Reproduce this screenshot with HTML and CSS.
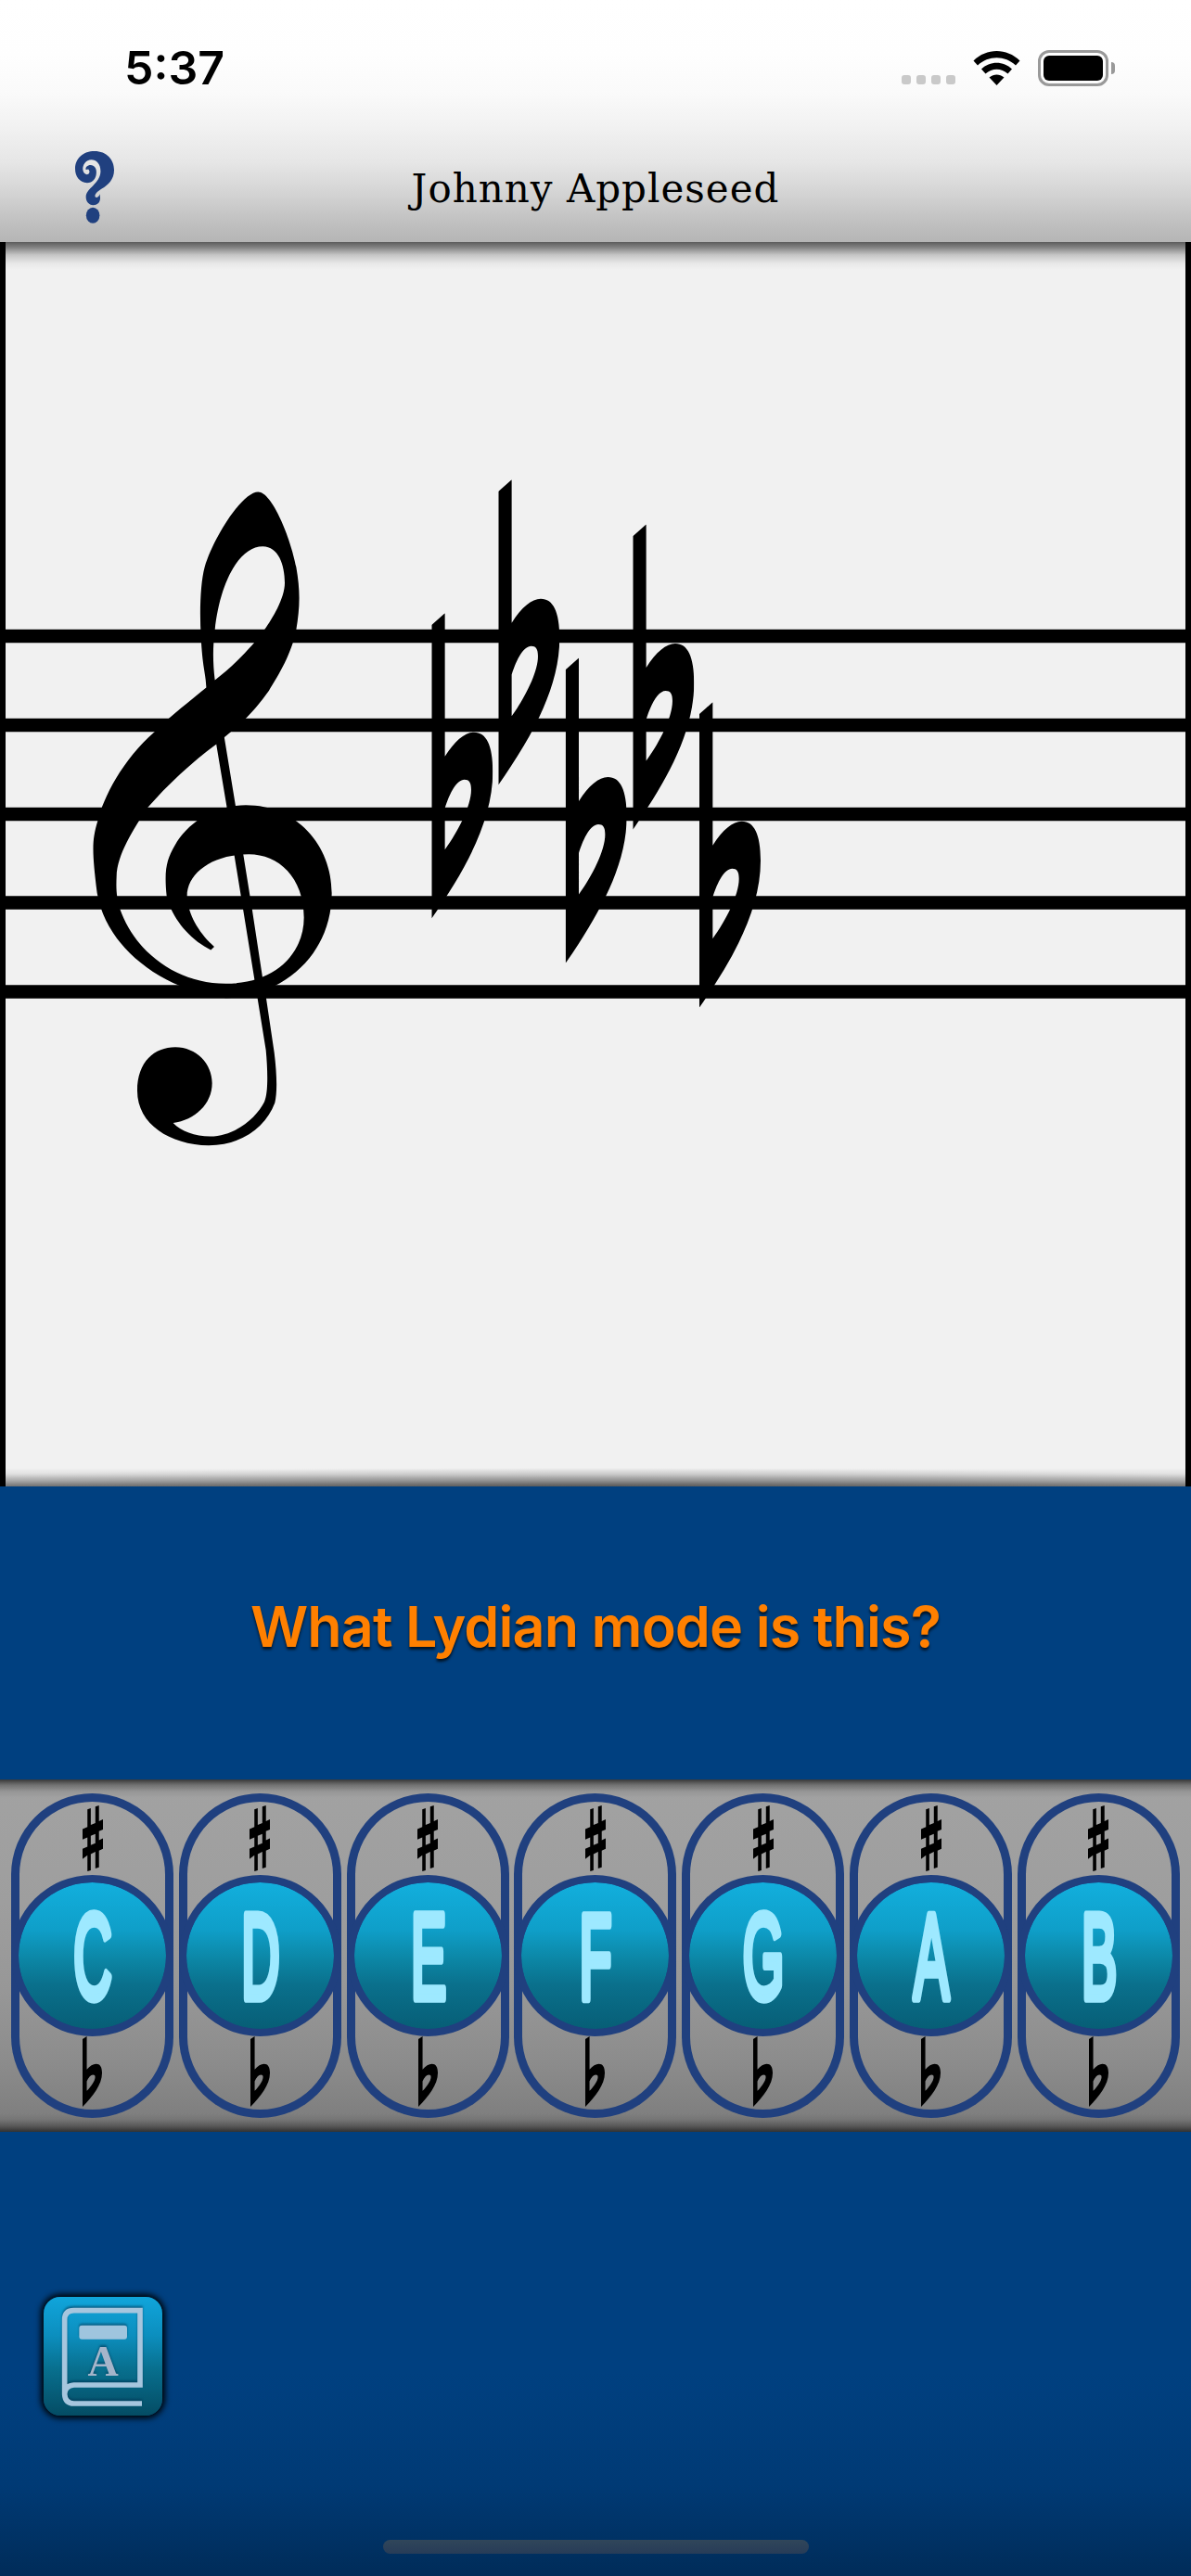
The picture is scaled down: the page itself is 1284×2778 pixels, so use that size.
FILE: index.html
```html
<!DOCTYPE html>
<html lang="en">
<head>
    <meta charset="UTF-8">
    <meta name="viewport" content="width=device-width, initial-scale=1.0">
    <title>Johnny Appleseed</title>
    <link rel="stylesheet" href="styles.css">
</head>
<body>
    <!-- Shared music symbols -->
    <svg class="symbols">
        <symbol id="sharp" viewBox="264 141 67 214" preserveAspectRatio="none">
            <path d="M280 154L291 150V204L306 198V145L318 141V192L331 186V219L318 225V254L331 248V282L318 288V342L306 346V292L291 299V352L280 355V303L264 315V282L280 275V245L264 252V218L280 211ZM291 240V270L306 264V234Z" fill-rule="evenodd"/>
        </symbol>
        <symbol id="flat" viewBox="0 0 198 833" preserveAspectRatio="none">
            <path d="M0 32L43 0V391C75 348 108 325 137 325C177 325 198 360 198 432C198 570 105 705 0 833ZM43 532V645C85 597 128 526 128 482C128 461 121 454 106 454C82 454 59 489 43 532Z" fill-rule="evenodd"/>
        </symbol>
    </svg>

    <header class="header">
        <div class="status-bar">
            <span class="time">5:37</span>
            <div class="status-icons">
                <div class="signal"><i></i><i></i><i></i><i></i></div>
                <svg class="wifi" viewBox="0 0 50 37">
                    <path d="M0 10.5C14-3.500 36-3.500 50 10.500L45.500 15.500C34 4.500 16 4.500 4.500 15.500Z"/>
                    <path d="M8.500 19.500C17.500 10.500 32.500 10.500 41.500 19.500L37 24.500C30 18 20 18 13 24.500Z"/>
                    <path d="M17 28.500C22 24.500 28 24.500 33 28.500L25 37Z"/>
                </svg>
                <div class="battery"><span></span></div>
            </div>
        </div>
        <div class="title-bar">
            <svg class="help" viewBox="199 489 101 233" preserveAspectRatio="none">
                <path d="M230 591C210 590 199 571 199 546C199 511 221 489 249 489C281 489 300 516 300 550C300 580 285 597 268 610C255 620 249 629 251 636C254 641 260 638 263 627L264 640C264 655 256 663 246 663C234 663 227 650 227 637C227 608 264 595 265 554C265 530 254 517 241 517C227 517 218 534 219 549C220 560 226 565 231 564C237 562 238 552 233 547L227 549C225 541 231 534 239 534C249 534 255 545 254 559C253 579 244 591 230 591Z"/>
                <ellipse cx="245" cy="696" rx="17.500" ry="25.500"/>
            </svg>
            <h1>Johnny Appleseed</h1>
        </div>
    </header>

    <main>
        <section class="staff">
            <svg viewBox="0 261 1284 1342">
                <!-- Staff lines -->
                <g class="lines">
                    <path d="M0 686H1284M0 782H1284M0 878H1284M0 973.500H1284M0 1069.500H1284"/>
                </g>
                <!-- Treble clef -->
                <g transform="translate(60 500) scale(.33333 .48469)">
                    <path fill-rule="evenodd" d="M487 496C486 470 474 450 470 385C465 330 468 265 482 230C513 160 605 63 655 63C700 63 760 165 778 230C792 285 790 320 778 370C764 422 720 472 690 505C650 545 600 580 545 609L520 624C440 664 360 716 298 765C250 815 199 870 197 918C195 950 197 965 208 991C255 1085 390 1157 550 1157C710 1157 803 1090 803 1010C803 920 720 869 625 869C505 869 425 912 425 962C428 1008 470 1048 513 1075L502 1082C430 1058 374 1008 359 962C350 902 360 880 385 850C430 795 520 760 615 760C780 760 893 850 893 955C893 1090 740 1185 550 1189C350 1172 165 1080 134 955C118 865 116 840 136 795C155 743 215 660 320 597C365 565 430 530 487 498ZM515 482C508 440 508 410 515 370C530 270 590 184 670 184C720 184 741 225 741 265C741 300 700 345 677 368C640 405 570 453 515 482Z"/>
                    <path d="M519 622L545 607L582 762L607 870L635 990L669 1143L681 1190L707 1310C716 1360 717 1400 709 1422C680 1475 605 1516 495 1517C370 1515 264 1470 264 1395C264 1330 320 1298 387 1298C455 1298 506 1335 506 1378C506 1425 450 1460 380 1467C405 1485 450 1497 500 1497C580 1497 650 1455 675 1420C688 1400 686 1350 680 1305L653 1190L600 965L578 872L553 762Z"/>
                </g>
                <!-- Key signature -->
                <use href="#flat" x="465.300" y="661.300" width="66" height="329.300"/>
                <use href="#flat" x="537.300" y="517.300" width="66" height="329.300"/>
                <use href="#flat" x="609.700" y="709.500" width="66" height="329.300"/>
                <use href="#flat" x="682.300" y="565.500" width="66" height="329.300"/>
                <use href="#flat" x="754" y="757.300" width="66" height="329.300"/>
            </svg>
        </section>

        <section class="question">
            <p>What Lydian mode is this?</p>
        </section>

        <section class="keys">
            <button class="key">
                <svg class="sharp"><use href="#sharp"/></svg>
                <span class="note"><svg viewBox="0 0 157 157"><text>C</text></svg></span>
                <svg class="flat"><use href="#flat"/></svg>
            </button>
            <button class="key">
                <svg class="sharp"><use href="#sharp"/></svg>
                <span class="note"><svg viewBox="0 0 157 157"><text>D</text></svg></span>
                <svg class="flat"><use href="#flat"/></svg>
            </button>
            <button class="key">
                <svg class="sharp"><use href="#sharp"/></svg>
                <span class="note"><svg viewBox="0 0 157 157"><text>E</text></svg></span>
                <svg class="flat"><use href="#flat"/></svg>
            </button>
            <button class="key">
                <svg class="sharp"><use href="#sharp"/></svg>
                <span class="note"><svg viewBox="0 0 157 157"><text>F</text></svg></span>
                <svg class="flat"><use href="#flat"/></svg>
            </button>
            <button class="key">
                <svg class="sharp"><use href="#sharp"/></svg>
                <span class="note"><svg viewBox="0 0 157 157"><text>G</text></svg></span>
                <svg class="flat"><use href="#flat"/></svg>
            </button>
            <button class="key">
                <svg class="sharp"><use href="#sharp"/></svg>
                <span class="note"><svg viewBox="0 0 157 157"><text>A</text></svg></span>
                <svg class="flat"><use href="#flat"/></svg>
            </button>
            <button class="key">
                <svg class="sharp"><use href="#sharp"/></svg>
                <span class="note"><svg viewBox="0 0 157 157"><text>B</text></svg></span>
                <svg class="flat"><use href="#flat"/></svg>
            </button>
        </section>
    </main>

    <footer class="footer">
        <button class="book">
            <svg viewBox="0 0 384 384">
                <path class="cover" d="M68 315V74Q68 44 98 44H312V285H98Q68 288 68 315Q70 345 98 345H318"/>
                <rect x="115" y="92" width="155" height="45" rx="9"/>
                <text x="192" y="254">A</text>
            </svg>
        </button>
        <div class="home-indicator"></div>
    </footer>
</body>
</html>
```
FILE: styles.css
```css
* {
    box-sizing: border-box;
}
body {
    margin: 0;
    width: 1284px;
    height: 2778px;
    display: flex;
    flex-direction: column;
    background: #004080;
    font-family: Inter, sans-serif;
    overflow: hidden;
}
button {
    border: none;
    padding: 0;
    cursor: pointer;
}
svg {
    display: block;
}
.symbols {
    display: none;
}

/* Header */
.header {
    height: 261px;
    background: linear-gradient(#fff 0, #fefefe 60px, #fafafa 100px, #f2f2f2 135px, #e6e6e6 175px, #d4d4d4 208px, #c3c3c3 235px, #b5b5b5 261px);
}
.status-bar {
    height: 146px;
    padding: 0 82px 0 134px;
    display: flex;
    justify-content: space-between;
    align-items: center;
}
.time {
    font-size: 50px;
    font-weight: 600;
}
.status-icons {
    display: flex;
    align-items: center;
    gap: 19px;
}
.signal {
    display: flex;
    gap: 6px;
    padding-top: 26px;
}
.signal i {
    width: 10px;
    height: 10px;
    border-radius: 3px;
    background: #c9c9c9;
}
.wifi {
    width: 51px;
    height: 37px;
}
.battery {
    display: flex;
    align-items: center;
    gap: 3px;
}
.battery span {
    width: 76px;
    height: 39px;
    border: 3px solid #999;
    border-radius: 12px;
    padding: 3px;
}
.battery span::before {
    content: "";
    display: block;
    height: 27px;
    border-radius: 6px;
    background: #000;
}
.battery::after {
    content: "";
    width: 4px;
    height: 13px;
    border-radius: 0 5px 5px 0;
    background: #999;
}
.title-bar {
    height: 115px;
    padding: 0 81px;
    display: grid;
    grid-template-columns: 42px 1fr 42px;
    align-items: center;
}
.help {
    width: 42px;
    height: 78px;
    margin-bottom: 3px;
    fill: #20407f;
}
h1 {
    margin: 0;
    text-align: center;
    font-family: "American Typewriter", "DejaVu Serif", serif;
    font-size: 42px;
    font-weight: 400;
    letter-spacing: 1px;
}

/* Staff */
.staff {
    height: 1342px;
    border: solid #000;
    border-width: 0 6px;
    display: flex;
    justify-content: center;
    background:
        linear-gradient(rgba(0, 0, 0, .62) 0, rgba(0, 0, 0, .45) 6px, rgba(0, 0, 0, .18) 14px, rgba(0, 0, 0, .04) 23px, transparent 30px),
        radial-gradient(ellipse 900px 20px at 50% 100%, rgba(0, 0, 0, .3), transparent),
        linear-gradient(to top, rgba(0, 0, 0, .48) 0, rgba(0, 0, 0, .25) 6px, rgba(0, 0, 0, .07) 13px, transparent 20px),
        #f1f1f1;
}
.staff svg {
    flex: none;
    width: 1284px;
    height: 1342px;
}
.lines {
    stroke: #000;
    stroke-width: 14.5;
}

/* Question */
.question {
    height: 316px;
    display: flex;
    justify-content: center;
    align-items: center;
}
.question p {
    margin: 0 0 14px;
    color: #ff8000;
    font-size: 61px;
    font-weight: 600;
    letter-spacing: -0.9px;
    white-space: nowrap;
    text-shadow: 0 3px 3px rgba(0, 0, 0, .7);
}

/* Answer keys */
.keys {
    height: 380px;
    padding: 15px 12px;
    display: flex;
    justify-content: space-between;
    background:
        linear-gradient(rgba(0, 0, 0, .65) 0, rgba(0, 0, 0, .3) 6px, rgba(0, 0, 0, .07) 13px, transparent 20px),
        linear-gradient(to top, rgba(0, 0, 0, .6) 0, rgba(0, 0, 0, .3) 6px, rgba(0, 0, 0, .07) 13px, transparent 20px),
        linear-gradient(#a2a2a2 0, #9e9e9e 35%, #979797 60%, #8c8c8c 80%, #7b7b7b 100%);
}
.key {
    width: 175px;
    height: 350px;
    padding-top: 13px;
    display: flex;
    flex-direction: column;
    align-items: center;
    border-radius: 88px;
    box-shadow: inset 0 0 0 9px #20407f;
    background: none;
    color: #000;
}
.sharp {
    width: 22px;
    height: 71px;
    margin-bottom: 4px;
}
.flat {
    width: 21px;
    height: 76px;
}
.note {
    width: 175px;
    height: 174px;
    border: 8.5px solid #20407f;
    border-radius: 50%;
    background: linear-gradient(#12afdd 0, #0f9fc9 32%, #0c87a6 52%, #0a708c 70%, #075e76 100%) padding-box, #20407f;
}
.note svg {
    width: 100%;
    height: 100%;
}
.note text {
    fill: #9ee9ff;
    stroke: #9ee9ff;
    stroke-width: 4.2px;
    stroke-linejoin: round;
    font-family: "Liberation Sans", Arial, sans-serif;
    font-size: 57px;
    text-anchor: middle;
    transform: translate(79px, 124.5px) scaleY(2.26);
}

/* Footer */
.footer {
    flex: 1;
    padding: 178px 47px 24px;
    display: flex;
    flex-direction: column;
    justify-content: space-between;
    background: linear-gradient(#004080 0, #004080 260px, #003a75 380px, #002c59 479px);
}
.book {
    width: 128px;
    height: 128px;
    border-radius: 18px;
    background: linear-gradient(#10a5db 0, #0c8fbf 32%, #08708f 60%, #044c64 100%);
    box-shadow: 0 0 6px 3px rgba(0, 0, 0, .95);
}
.book svg {
    width: 100%;
    height: 100%;
    fill: #9fc5de;
    filter: drop-shadow(0 -2px 1px rgba(0, 50, 80, .55));
}
.book .cover {
    fill: none;
    stroke: #a6c6de;
    stroke-width: 17;
}
.book text {
    fill: #a4b5ca;
    font-family: "Liberation Serif", serif;
    font-size: 138px;
    font-weight: 700;
    text-anchor: middle;
}
.home-indicator {
    width: 459px;
    height: 15px;
    border-radius: 8px;
    align-self: center;
    background: linear-gradient(#30465a, #273c58);
}
```
